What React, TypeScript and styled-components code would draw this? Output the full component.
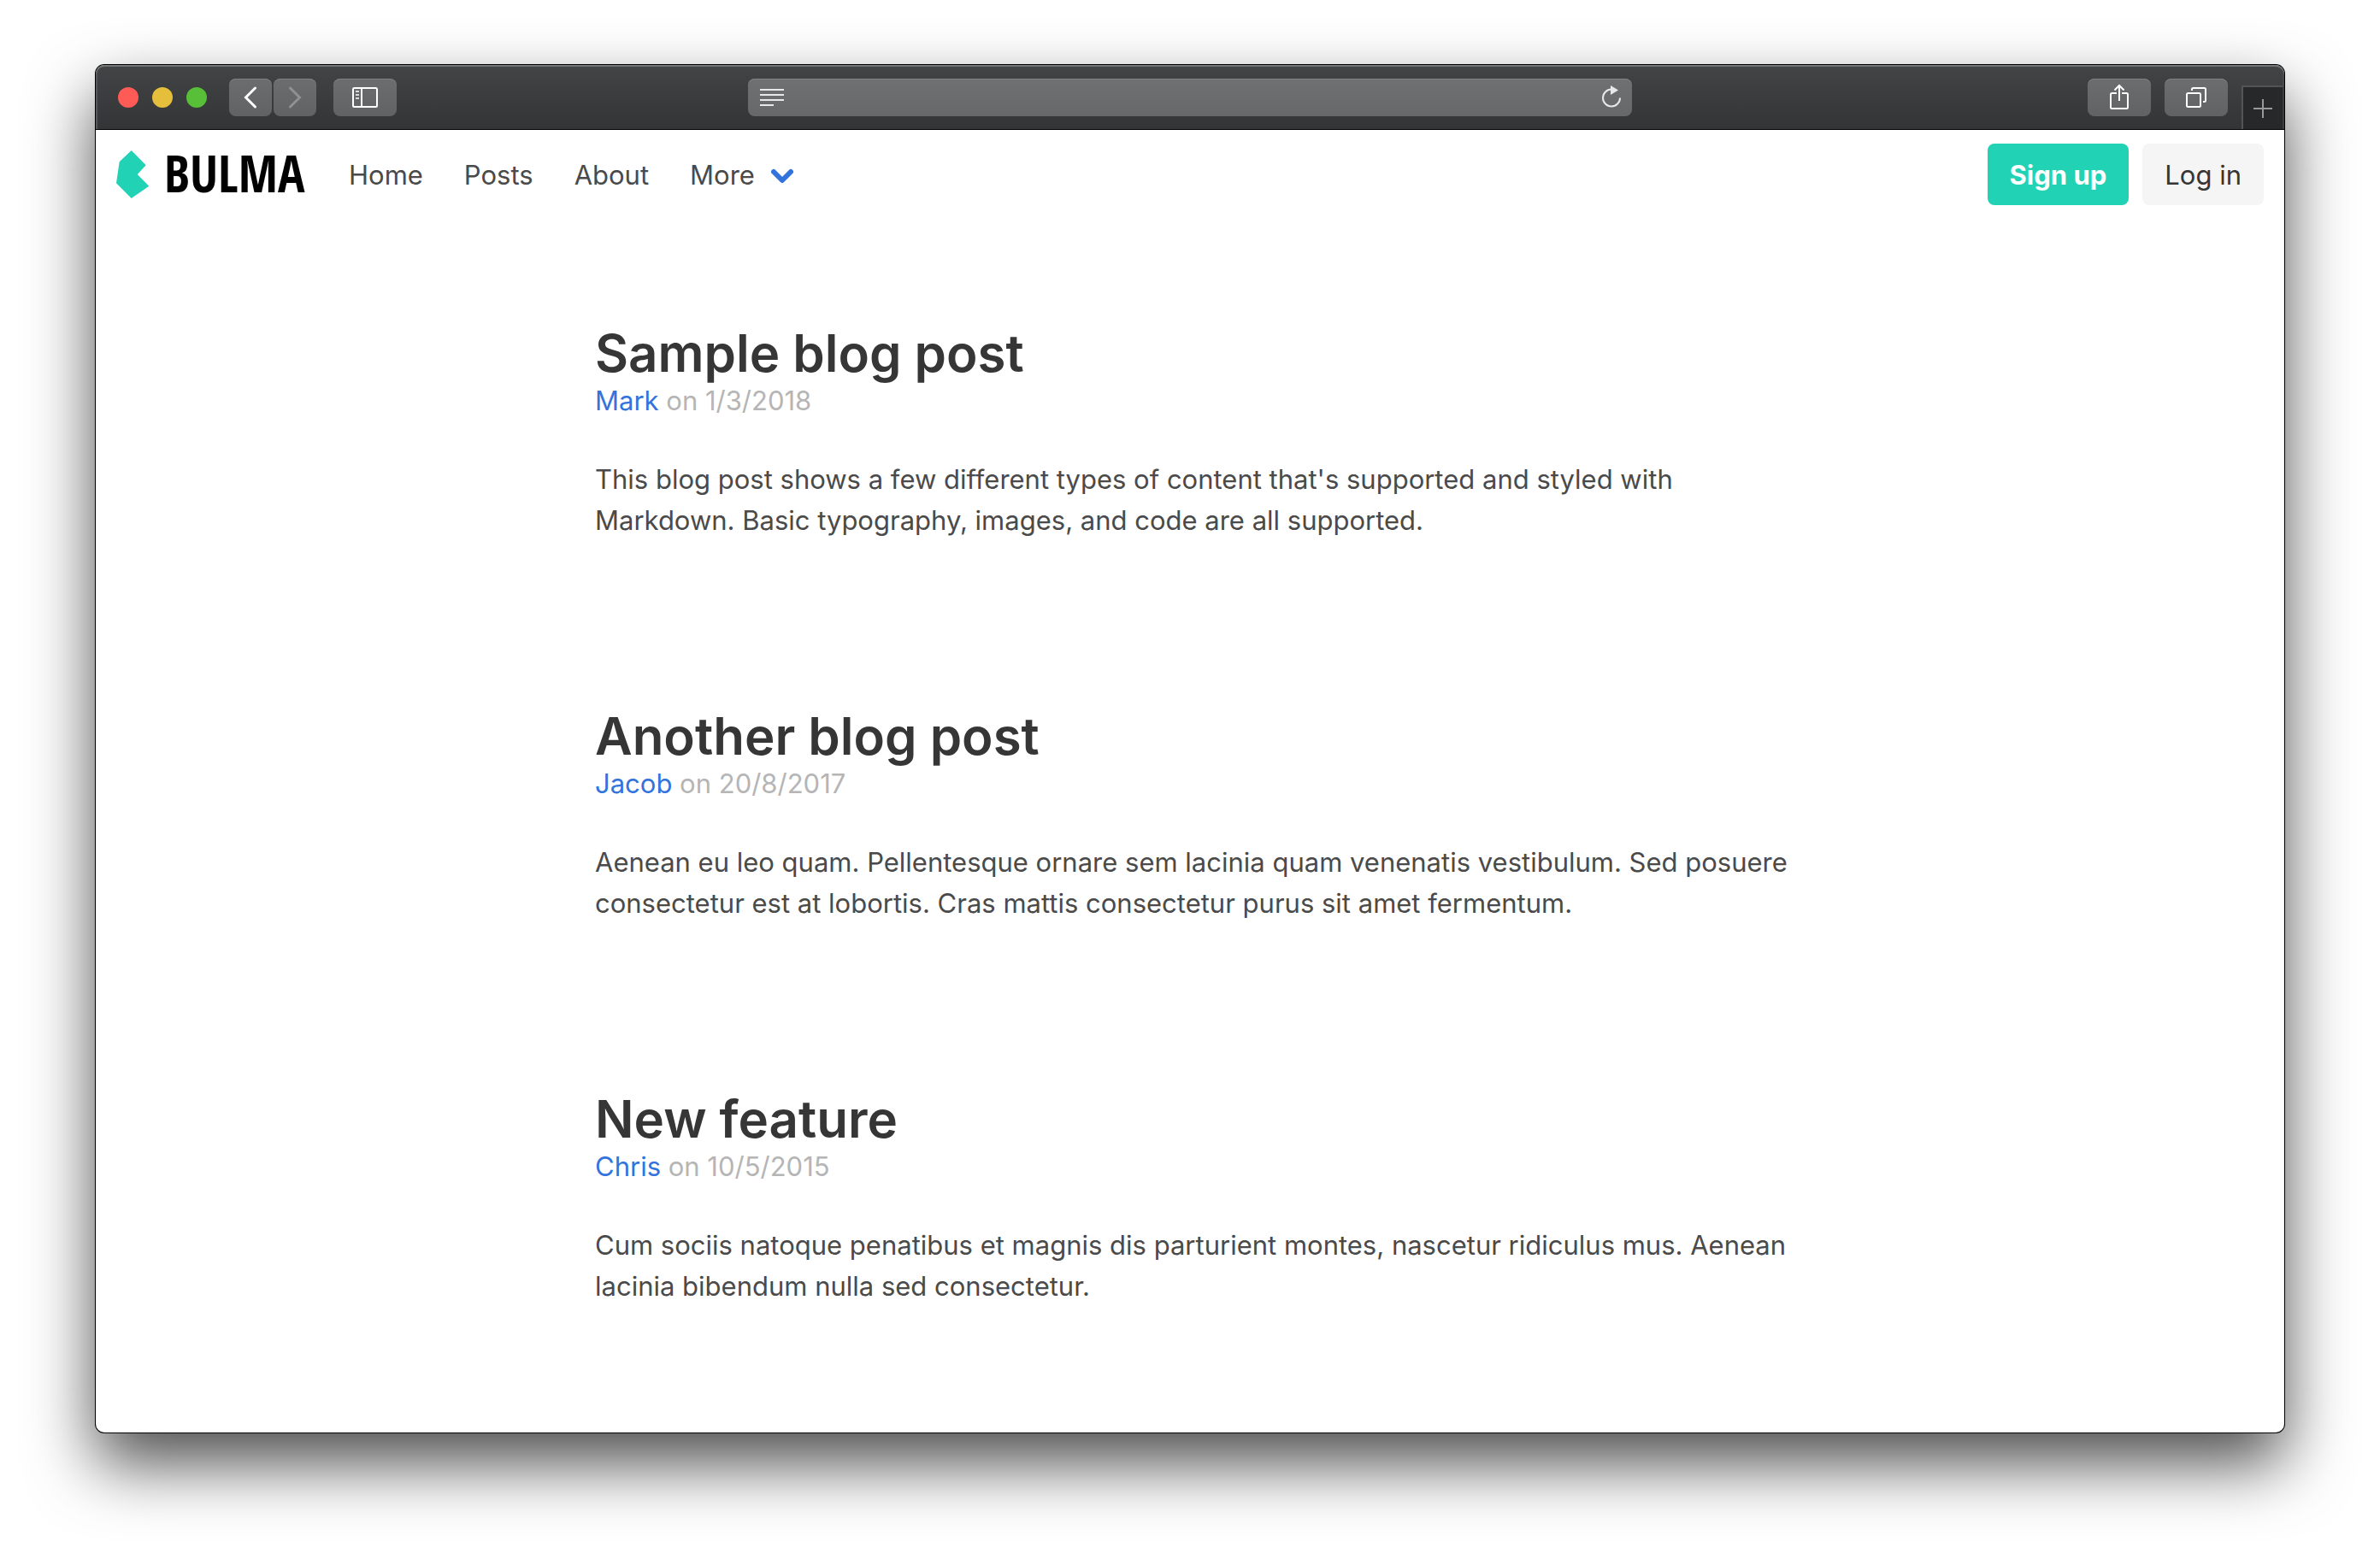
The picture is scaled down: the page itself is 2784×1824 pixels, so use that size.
import React from 'react';
import styled, { createGlobalStyle } from 'styled-components';

const GlobalStyle = createGlobalStyle`
  *, *::before, *::after { box-sizing: border-box; }
  body {
    margin: 0;
    background: #fff;
    color: #4a4a4a;
    font-family: Inter, "Liberation Sans", sans-serif;
    font-size: 31px;
    line-height: 48px;
  }
  a { color: #3273dc; text-decoration: none; }
`;

const Desktop = styled.div`
  display: flex;
  min-height: 100vh;
  padding: 76px 112px 148px;
`;

const BrowserWindow = styled.div`
  flex: 1;
  min-width: 0;
  display: flex;
  flex-direction: column;
  overflow: hidden;
  background: #fff;
  border-radius: 10px;
  box-shadow: 0 0 0 1px #000, 0 36px 78px rgba(0, 0, 0, 0.7);
`;

const Toolbar = styled.div`
  display: grid;
  grid-template-columns: minmax(0, 1fr) minmax(0, 1034px) minmax(0, 1fr);
  align-items: center;
  height: 76px;
  border-radius: 10px 10px 0 0;
  background: linear-gradient(#424446, #333436);
  box-shadow: inset 0 -1px #000, inset 0 2px #737576, inset 2px 0 #55575a, inset -2px 0 #47494b;
`;

const ToolGroup = styled.div`
  display: flex;
  align-items: center;
  padding-left: 26px;
`;

const RightTools = styled.div`
  display: flex;
  align-items: center;
  align-self: stretch;
  justify-content: flex-end;
  gap: 16px;
`;

const Lights = styled.div`
  display: flex;
  gap: 16px;
  margin-right: 26px;
`;

const Light = styled.button<{ $color: string }>`
  width: 24px;
  height: 24px;
  padding: 0;
  border: 0;
  border-radius: 50%;
  background: ${(p) => p.$color};
`;

const ToolButton = styled.button<{ $narrow?: boolean }>`
  display: grid;
  place-items: center;
  width: ${(p) => (p.$narrow ? 50 : 74)}px;
  height: 44px;
  padding: 0;
  border: 0;
  border-radius: 8px;
  color: #fff;
  background: linear-gradient(#6c6d6f, #616264);
  box-shadow: inset 0 1px #7f8081;
  &:disabled { color: #909192; }
`;

const History = styled.div`
  display: flex;
  gap: 2px;
  margin-right: 20px;
`;

const AddressBar = styled.div`
  display: flex;
  align-items: center;
  height: 44px;
  padding: 0 12px 0 14px;
  border-radius: 8px;
  color: #e8e8e8;
  background: linear-gradient(#6f7072, #67686a);
  box-shadow: inset 0 1px #818283;
`;

const AddressInput = styled.input`
  flex: 1;
  min-width: 0;
  height: 44px;
  padding: 0 16px;
  border: 0;
  outline: 0;
  background: transparent;
  color: #fff;
  font: inherit;
  font-size: 26px;
`;

const BareButton = styled.button`
  display: grid;
  padding: 0;
  border: 0;
  background: none;
  color: inherit;
`;

const NewTab = styled.button`
  display: grid;
  place-items: center;
  align-self: flex-end;
  width: 50px;
  height: 51px;
  margin-bottom: 1px;
  padding: 0;
  border: solid #535456;
  border-width: 2px 2px 0 2px;
  border-right-color: #3c3d3e;
  color: #98999a;
  background: #272829;
`;

const Navbar = styled.nav`
  display: flex;
  justify-content: space-between;
  align-items: center;
  height: 104px;
  padding: 0 24px;
`;

const NavLinks = styled.div`
  display: flex;
  align-items: center;
`;

const Brand = styled.a`
  display: grid;
  margin-right: 24px;
`;

const NavLink = styled.a`
  display: flex;
  align-items: center;
  gap: 19px;
  padding: 2px 24px 0;
  color: #4a4a4a;
`;

const Buttons = styled.div`
  display: flex;
  gap: 16px;
`;

const Button = styled.button<{ $primary?: boolean }>`
  height: 72px;
  padding: 2px 26px 0;
  border: 0;
  border-radius: 8px;
  font: inherit;
  font-weight: ${(p) => (p.$primary ? 700 : 400)};
  color: ${(p) => (p.$primary ? '#fff' : '#363636')};
  background: ${(p) => (p.$primary ? '#22d2b4' : '#f5f5f5')};
`;

const Posts = styled.main`
  display: flex;
  flex-direction: column;
  gap: 192px;
  width: 100%;
  max-width: 1392px;
  margin: 0 auto;
  padding: 121px 0 144px;
`;

const Title = styled.h1`
  margin: 0;
  color: #363636;
  font-size: 60px;
  font-weight: 600;
  line-height: 72px;
`;

const Meta = styled.p`
  margin: 0 0 48px;
  color: #b5b5b5;
  line-height: 40px;
`;

const Summary = styled.p`
  margin: 0 -16px 0 0;
`;

const LogoDrawing = styled.svg`
  overflow: visible;
`;

const BulmaLogo = () => (
  <LogoDrawing width="224" height="56" viewBox="0 0 224 56" role="img" aria-label="Bulma">
    <path fill="#22d2b4" d="M17.7 0 34.7 17.3 24.7 28 38.3 41.7 17.7 56 0 38.3 3.7 13.3z" />
    <text
      x="56"
      y="49"
      fontFamily='"Open Sans Condensed", "Open Sans", sans-serif'
      fontSize="59"
      fontWeight="700"
    >
      BULMA
    </text>
  </LogoDrawing>
);

const BackIcon = () => (
  <svg width="24" height="28" fill="none" stroke="currentColor" strokeWidth="3" strokeLinecap="round">
    <path d="M17.500 3 6.500 14l11 11" />
  </svg>
);

const ForwardIcon = () => (
  <svg width="24" height="28" fill="none" stroke="currentColor" strokeWidth="3" strokeLinecap="round">
    <path d="m6.500 3 11 11-11 11" />
  </svg>
);

const SidebarIcon = () => (
  <svg width="30" height="24" fill="none" stroke="currentColor" strokeWidth="2">
    <rect x="1" y="1" width="28" height="22" rx="1.5" />
    <path d="M11 1v22" />
    <path d="M4 5h4M4 9h4M4 13h4" strokeOpacity=".75" />
  </svg>
);

const ReaderIcon = () => (
  <svg width="28" height="20" fill="none" stroke="currentColor" strokeWidth="2">
    <path d="M0 1h28M0 7h28M0 13h28M0 19h16" />
  </svg>
);

const ReloadIcon = () => (
  <svg width="24" height="28" fill="none">
    <path d="M22 14.500A10 10 0 1 1 12 4.500" stroke="currentColor" strokeWidth="2" />
    <path d="M11 0 20 5.500 11 11z" fill="currentColor" />
  </svg>
);

const ShareIcon = () => (
  <svg width="24" height="32" fill="none" stroke="currentColor" strokeWidth="2">
    <path d="M9 11H3.500Q2 11 2 12.500V27.500Q2 29 3.500 29H20.500Q22 29 22 27.500V12.500Q22 11 20.500 11H15" />
    <path d="M12 20V2M6.500 7.500 12 2l5.500 5.500" />
  </svg>
);

const TabsIcon = () => (
  <svg width="24" height="24" fill="none" stroke="currentColor" strokeWidth="2">
    <rect x="1" y="7" width="16" height="16" rx="1.5" />
    <path d="M7 4V2.500Q7 1 8.500 1H21.500Q23 1 23 2.500V15.500Q23 17 21.500 17H20" />
  </svg>
);

const PlusIcon = () => (
  <svg width="22" height="22" stroke="currentColor" strokeWidth="2">
    <path d="M11 0v22M0 11h22" />
  </svg>
);

const ArrowIcon = () => (
  <svg width="26" height="24" fill="none" stroke="#3273dc" strokeWidth="6" strokeLinecap="round" strokeLinejoin="round">
    <path d="m3 8 10 10L23 8" />
  </svg>
);

const posts = [
  {
    title: 'Sample blog post',
    author: 'Mark',
    date: '1/3/2018',
    summary:
      "This blog post shows a few different types of content that's supported and styled with Markdown. Basic typography, images, and code are all supported.",
  },
  {
    title: 'Another blog post',
    author: 'Jacob',
    date: '20/8/2017',
    summary:
      'Aenean eu leo quam. Pellentesque ornare sem lacinia quam venenatis vestibulum. Sed posuere consectetur est at lobortis. Cras mattis consectetur purus sit amet fermentum.',
  },
  {
    title: 'New feature',
    author: 'Chris',
    date: '10/5/2015',
    summary:
      'Cum sociis natoque penatibus et magnis dis parturient montes, nascetur ridiculus mus. Aenean lacinia bibendum nulla sed consectetur.',
  },
];

export default function App() {
  return (
    <Desktop>
      <GlobalStyle />
      <BrowserWindow>
        <Toolbar>
          <ToolGroup>
            <Lights>
              <Light $color="#fe5b57" aria-label="Close" />
              <Light $color="#e5bf3c" aria-label="Minimize" />
              <Light $color="#58c038" aria-label="Zoom" />
            </Lights>
            <History>
              <ToolButton $narrow aria-label="Back"><BackIcon /></ToolButton>
              <ToolButton $narrow disabled aria-label="Forward"><ForwardIcon /></ToolButton>
            </History>
            <ToolButton aria-label="Sidebar"><SidebarIcon /></ToolButton>
          </ToolGroup>
          <AddressBar>
            <BareButton aria-label="Reader view"><ReaderIcon /></BareButton>
            <AddressInput type="text" aria-label="Address" />
            <BareButton aria-label="Reload"><ReloadIcon /></BareButton>
          </AddressBar>
          <RightTools>
            <ToolButton aria-label="Share"><ShareIcon /></ToolButton>
            <ToolButton aria-label="Show tabs"><TabsIcon /></ToolButton>
            <NewTab aria-label="New tab"><PlusIcon /></NewTab>
          </RightTools>
        </Toolbar>
        <Navbar>
          <NavLinks>
            <Brand href="#"><BulmaLogo /></Brand>
            <NavLink href="#">Home</NavLink>
            <NavLink href="#">Posts</NavLink>
            <NavLink href="#">About</NavLink>
            <NavLink href="#">More <ArrowIcon /></NavLink>
          </NavLinks>
          <Buttons>
            <Button $primary>Sign up</Button>
            <Button>Log in</Button>
          </Buttons>
        </Navbar>
        <Posts>
          {posts.map((post) => (
            <article key={post.title}>
              <Title>{post.title}</Title>
              <Meta>
                <a href="#">{post.author}</a> on {post.date}
              </Meta>
              <Summary>{post.summary}</Summary>
            </article>
          ))}
        </Posts>
      </BrowserWindow>
    </Desktop>
  );
}
